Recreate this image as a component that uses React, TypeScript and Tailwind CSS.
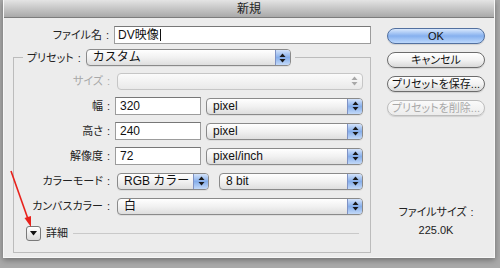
import React from "react";

const font = {
  fontFamily: '"Liberation Sans", "Noto Sans CJK JP", sans-serif',
};

// little up/down arrows used inside the popup menus
const Arrows = ({ color }: { color: string }) => (
  <svg width="7" height="10" viewBox="0 0 7 10">
    <polygon points="3.5,0.5 6.5,4 0.5,4" fill={color} />
    <polygon points="0.5,6 6.5,6 3.5,9.5" fill={color} />
  </svg>
);

const Select = ({
  value,
  className,
  disabled,
}: {
  value: string;
  className: string;
  disabled?: boolean;
}) => {
  if (disabled) {
    return (
      <div
        className={`flex h-[17px] rounded-[4px] border border-[#c6c6c6] bg-linear-to-b from-[#fbfbfb] to-[#e9e9e9] overflow-hidden ${className}`}
      >
        <span className="flex-1" />
        <span className="w-[15px] flex items-center justify-center">
          <Arrows color="#a8a8a8" />
        </span>
      </div>
    );
  }
  return (
    <div
      className={`flex h-[17px] rounded-[4px] border border-[#8a8a8a] bg-linear-to-b from-white via-[#f1f1f1] to-[#dedede] overflow-hidden shadow-[0_1px_0_rgba(0,0,0,0.06)] ${className}`}
    >
      <span className="flex-1 pl-[6px] text-[12px] leading-[15px] text-[#111] whitespace-nowrap">
        {value}
      </span>
      <span className="w-[15px] flex items-center justify-center border-l border-[#7f92c4] bg-linear-to-b from-[#d4e3fa] via-[#86aeea] to-[#c3d9f8]">
        <Arrows color="#1a1a1a" />
      </span>
    </div>
  );
};

const Input = ({ value, className }: { value: string; className: string }) => (
  <div
    className={`h-[18px] bg-white border border-[#9c9c9c] border-t-[#777] pl-[4px] text-[12px] leading-[16px] text-[#111] ${className}`}
  >
    {value}
  </div>
);

// label text followed by a spaced half-width colon
const Label = ({
  text,
  dim,
  className = "w-[101px]",
}: {
  text: string;
  dim?: boolean;
  className?: string;
}) => (
  <span
    className={`shrink-0 text-right text-[11px] leading-[18px] whitespace-nowrap [font-feature-settings:'palt'] ${className} ${
      dim ? "text-[#a8a8a8]" : "text-[#222]"
    }`}
  >
    {text}
    <span className="ml-[4px] mr-[5px]">:</span>
  </span>
);

const Button = ({
  text,
  primary,
  disabled,
}: {
  text: string;
  primary?: boolean;
  disabled?: boolean;
}) => {
  let cls =
    "border-[#6c6c6c] bg-linear-to-b from-white via-[#f3f3f3] to-[#d9d9d9] text-[#111]";
  if (primary)
    cls =
      "border-[#52709f] bg-linear-to-b from-[#d9e8fc] via-[#86b0ee] to-[#bcd8fc] text-[#111]";
  if (disabled)
    cls =
      "border-[#bdbdbd] bg-linear-to-b from-[#fafafa] to-[#ececec] text-[#a8a8a8]";
  return (
    <div
      className={`h-[16px] w-[98px] rounded-full border flex items-center justify-center text-[11px] leading-[14px] [font-feature-settings:'palt'] shadow-[0_1px_1px_rgba(0,0,0,0.12)] ${cls}`}
    >
      {text}
    </div>
  );
};

export default function App() {
  return (
    <div
      className="relative w-[500px] h-[268px] bg-[#a9a9a9] pl-[3px] pr-[5px] pb-[10px] overflow-hidden"
      style={font}
    >
      <div className="flex flex-col h-full bg-[#ececec] border-x border-b border-[#f7f7f7] shadow-[0_2px_6px_rgba(0,0,0,0.35)]">
        {/* title bar */}
        <div className="h-[18px] shrink-0 flex items-center justify-center bg-linear-to-b from-[#e4e4e4] via-[#c6c6c6] to-[#a9a9a9] border-b border-[#7c7c7c] text-[12px] text-[#1e1e1e] leading-[16px] pt-[1px]">
          新規
        </div>

        <div className="flex flex-1">
          {/* left side */}
          <div className="w-[380px] shrink-0 flex flex-col">
            <div className="flex items-center mt-[8px]">
              <Label text="ファイル名" className="w-[110px]" />
              <div className="h-[18px] w-[257px] bg-white border border-[#9c9c9c] border-t-[#777] pl-[3px] text-[12px] leading-[16px] text-[#111] flex items-center">
                DV映像
                <span className="ml-[1px] w-px h-[12px] bg-[#111]" />
              </div>
            </div>

            {/* preset group */}
            <div className="ml-[9px] mt-[13px] w-[358px] h-[196px] border border-[#bcbcbc] flex flex-col">
              <div className="flex items-center -mt-[9px] ml-[9px] self-start bg-[#ececec] px-[4px] h-[17px]">
                <Label text="プリセット" className="" />
                <Select value="カスタム" className="w-[205px]" />
              </div>

              <div className="flex flex-col gap-[7px] mt-[6px]">
                <div className="flex items-center h-[18px]">
                  <Label text="サイズ" dim />
                  <Select value="" disabled className="w-[246px] ml-[2px]" />
                </div>
                <div className="flex items-center h-[18px]">
                  <Label text="幅" />
                  <Input value="320" className="w-[86px]" />
                  <Select value="pixel" className="w-[157px] ml-[5px]" />
                </div>
                <div className="flex items-center h-[18px]">
                  <Label text="高さ" />
                  <Input value="240" className="w-[86px]" />
                  <Select value="pixel" className="w-[157px] ml-[5px]" />
                </div>
                <div className="flex items-center h-[18px]">
                  <Label text="解像度" />
                  <Input value="72" className="w-[86px]" />
                  <Select value="pixel/inch" className="w-[157px] ml-[5px]" />
                </div>
                <div className="flex items-center h-[18px]">
                  <Label text="カラーモード" />
                  <Select value="RGB カラー" className="w-[92px] ml-[2px]" />
                  <Select value="8 bit" className="w-[144px] ml-[10px]" />
                </div>
                <div className="flex items-center h-[18px]">
                  <Label text="カンバスカラー" />
                  <Select value="白" className="w-[246px] ml-[2px]" />
                </div>
              </div>

              {/* advanced */}
              <div className="flex items-center mt-[10px] ml-[12px] h-[16px]">
                <div className="w-[15px] h-[15px] rounded-[3px] border border-[#7a7a7a] bg-linear-to-b from-white to-[#dadada] flex items-center justify-center">
                  <svg width="7" height="5" viewBox="0 0 7 5">
                    <polygon points="0,0 7,0 3.5,4.5" fill="#111" />
                  </svg>
                </div>
                <span className="ml-[5px] text-[11px] leading-[16px] text-[#222]">
                  詳細
                </span>
                <div className="ml-[5px] w-[286px] h-px bg-[#c9c9c9]" />
              </div>
            </div>
          </div>

          {/* right side */}
          <div className="ml-[3px] flex flex-col items-center w-[98px]">
            <div className="flex flex-col gap-[8px] mt-[10px]">
              <Button text="OK" primary />
              <Button text="キャンセル" />
              <Button text="プリセットを保存..." />
              <Button text="プリセットを削除..." disabled />
            </div>
            <div className="mt-[87px] text-center text-[11px] leading-[18px] text-[#222] [font-feature-settings:'palt']">
              <div>
                ファイルサイズ<span className="ml-[4px]">:</span>
              </div>
              <div>225.0K</div>
            </div>
          </div>
        </div>
      </div>

      {/* red annotation arrow */}
      <svg
        className="absolute left-0 top-0 pointer-events-none"
        width="500"
        height="268"
        viewBox="0 0 500 268"
      >
        <line x1="11" y1="171" x2="28" y2="219" stroke="#e8221c" strokeWidth="1.6" />
        <polygon points="31,227 24.5,218 31,216" fill="#e8221c" />
      </svg>
    </div>
  );
}
